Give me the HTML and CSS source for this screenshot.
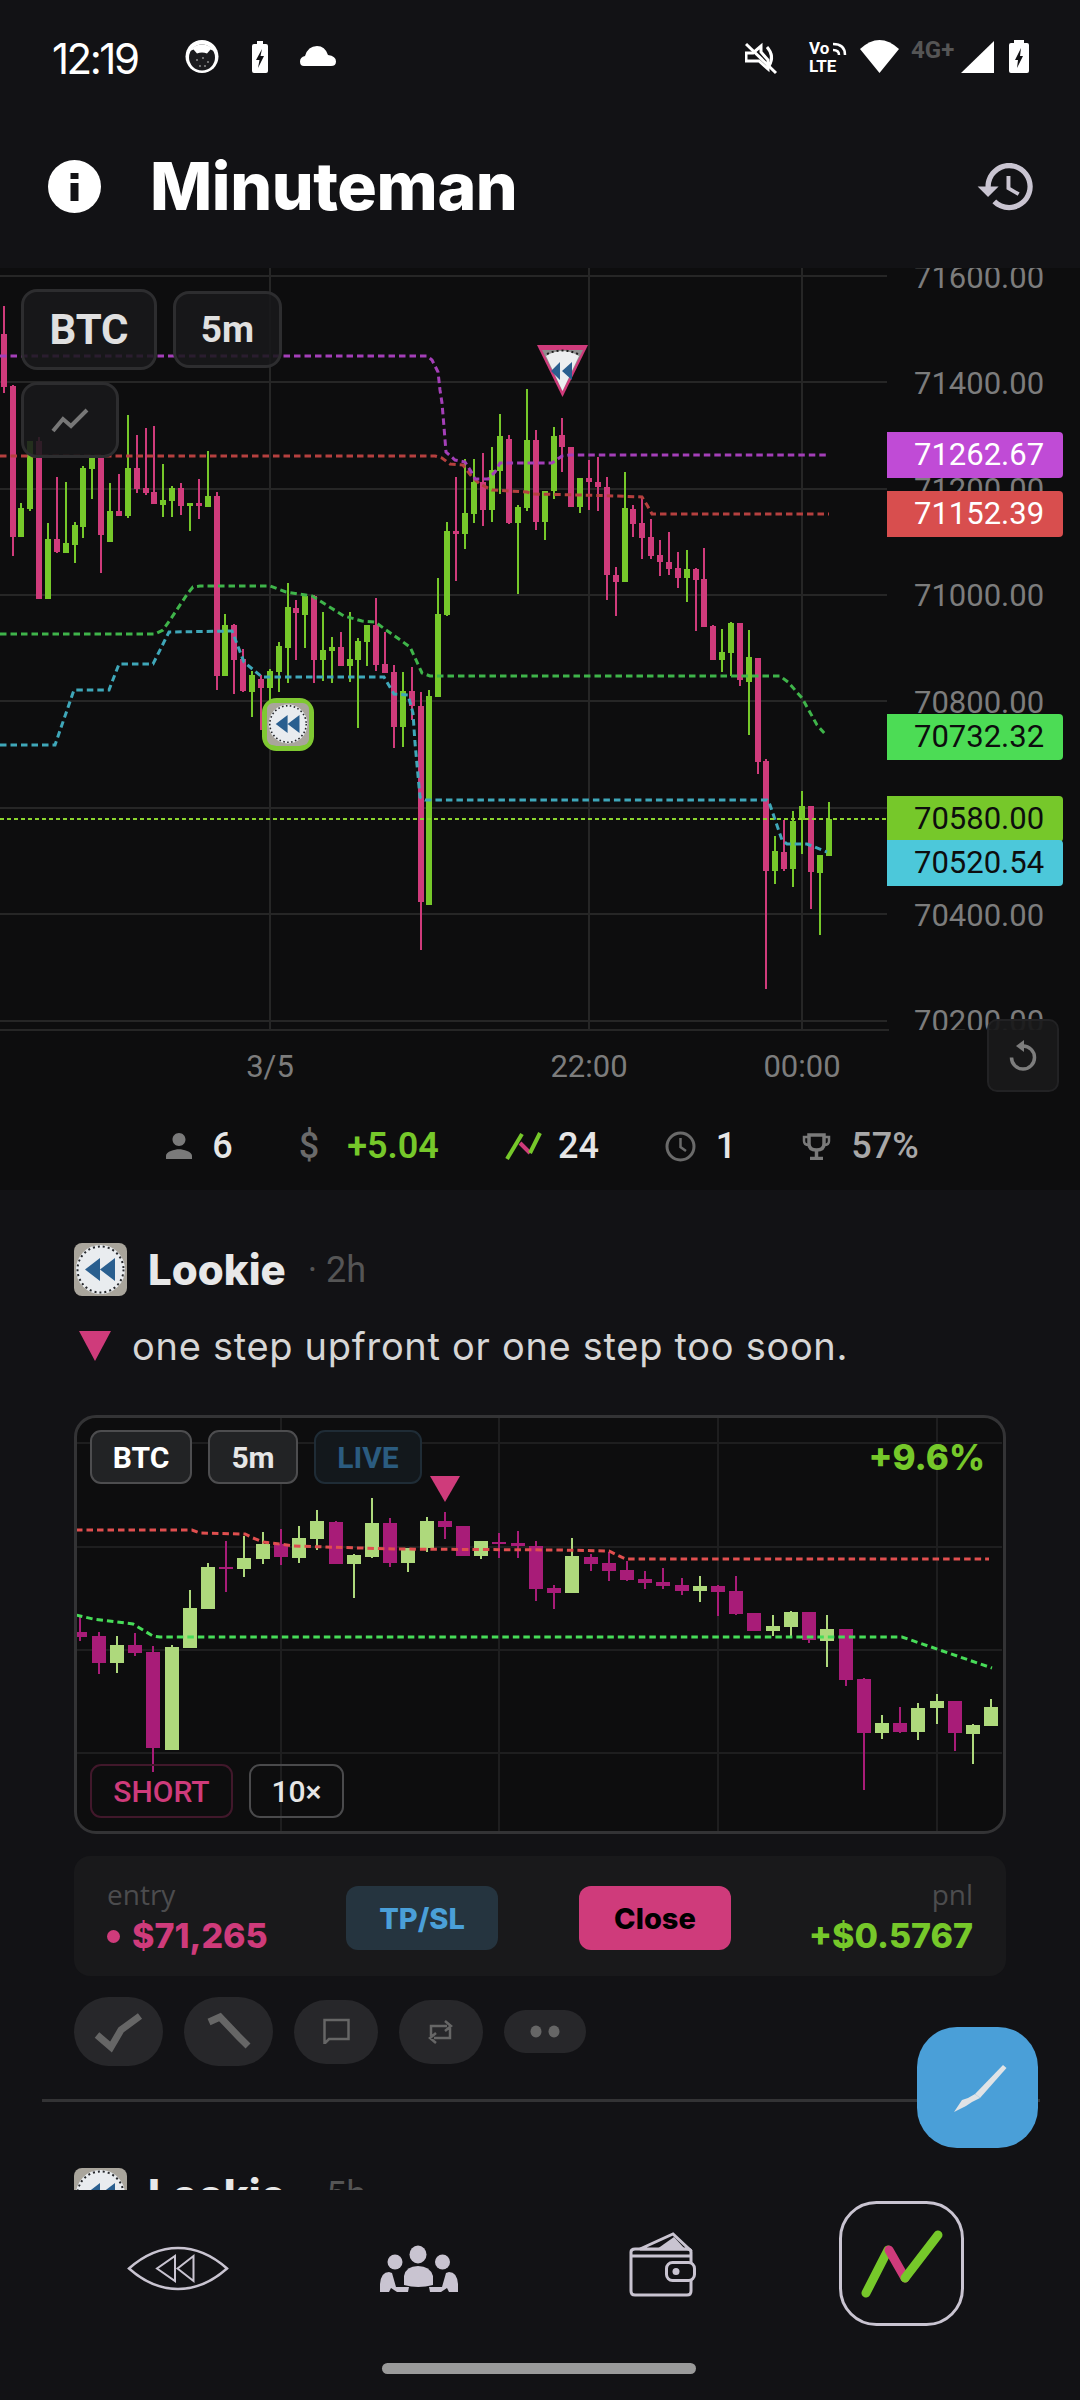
FILE: index.html
```
<!DOCTYPE html>
<html lang="en">
<head>
<meta charset="utf-8">
<title>Minuteman</title>
<link rel="stylesheet" href="styles.css">
</head>
<body>
<svg class="defs" width="0" height="0" aria-hidden="true">
  <symbol id="logo" viewBox="0 0 53 53">
    <rect width="53" height="53" rx="8" fill="#a9a59c"/>
    <circle cx="26.5" cy="26.5" r="24.5" fill="#e9ecef"/>
    <circle cx="26.5" cy="26.5" r="23" fill="none" stroke="#26282c" stroke-width="2" stroke-dasharray="2 3"/>
    <path d="M26 15V38L11 26.5ZM41 15V38L26 26.5Z" fill="#2a5f8f"/>
  </symbol>
</svg>
<div class="screen">
  <header class="top">
    <div class="status">
      <span class="clock">12:19</span>
      <svg class="status-left" width="151" height="40" viewBox="185 36 151 40">
        <circle cx="202" cy="56.5" r="16.5" fill="#fff"/>
        <circle cx="202" cy="57.5" r="13" fill="#1b1b1e"/>
        <path d="M190 51Q193 45 202 44.5Q211 45 214 51L210.500 49.500L207 53.500Q202 51.500 197 53.500L193.500 49.500Z" fill="#fff"/>
        <g fill="#8c8c8c"><circle cx="197" cy="60" r="1"/><circle cx="203" cy="58" r="1"/><circle cx="208" cy="62" r="1"/><circle cx="200" cy="66" r="1"/><circle cx="205" cy="66" r="1"/></g>
        <path d="M257 41H263V44H266Q268 44 268 46V71Q268 73 266 73H254Q252 73 252 71V46Q252 44 254 44H257Z" fill="#fff"/>
        <path d="M262 49L256 60H259.500L258 68L264 56H260.500Z" fill="#121215"/>
        <path d="M304 66Q300 66 300 61.500Q300 57 305 56Q308 46 317 46Q325 46 328 55Q336 56 336 61.500Q336 66 331 66Z" fill="#fff"/>
      </svg>
      <svg class="status-right" width="284" height="40" viewBox="745 36 284 40">
        <path d="M746 53H753L761 46V52L768 60V69L759 61H746Z" fill="none" stroke="#fff" stroke-width="3"/>
        <path d="M767 47Q775 56 769 66" fill="none" stroke="#fff" stroke-width="3"/>
        <path d="M746 44L776 73" stroke="#fff" stroke-width="3"/>
        <text class="volte" x="809" y="53.500">Vo</text>
        <text class="volte" x="809" y="72">LTE</text>
        <path d="M833 44Q845 44 845 55M833 50Q839 50 839 55" fill="none" stroke="#fff" stroke-width="2.500"/>
        <path d="M860 49Q879.500 31 899 49L879.500 73Z" fill="#fff"/>
        <text class="net" x="911" y="58">4G+</text>
        <path d="M961 73L994 41V73Z" fill="#fff"/>
        <path d="M1014 40H1024V43H1027Q1029 43 1029 45V71Q1029 73 1027 73H1011Q1009 73 1009 71V45Q1009 43 1011 43H1014Z" fill="#fff"/>
        <path d="M1021 48L1015 60H1018L1017 68L1023 56H1020Z" fill="#121215"/>
      </svg>
    </div>
    <div class="appbar">
      <svg class="info" width="53" height="53" viewBox="0 0 53 53">
        <circle cx="26.500" cy="26.500" r="26.500" fill="#fff"/>
        <rect x="22.500" y="13" width="8" height="6" fill="#121215"/>
        <rect x="22.500" y="23" width="8" height="18" fill="#121215"/>
      </svg>
      <h1 class="title">Minuteman</h1>
      <svg class="history" width="63" height="63" viewBox="0 0 24 24"><path fill="#c9c4d1" d="M13 3c-4.970 0-9 4.030-9 9H1l3.890 3.890.070.140L9 12H6c0-3.870 3.130-7 7-7s7 3.130 7 7-3.130 7-7 7c-1.930 0-3.680-.790-4.940-2.060l-1.420 1.420C8.270 19.990 10.510 21 13 21c4.970 0 9-4.030 9-9s-4.030-9-9-9zm-1 5v5l4.280 2.540.720-1.210-3.500-2.080V8H12z"/></svg>
    </div>
  </header>

  <section class="market">
    <svg class="chart" width="1080" height="822" viewBox="0 268 1080 822">
      <defs><clipPath id="plot"><rect x="0" y="268" width="1080" height="762"/></clipPath></defs>
      <g class="grid">
        <path d="M0 276H887M0 382H887M0 489H887M0 595H887M0 701H887M0 808H887M0 914H887M0 1021H887M0 1030H889M270 268V1030M589 268V1030M802 268V1030"/>
      </g>
      <g class="ticks" clip-path="url(#plot)">
        <text x="914" y="288">71600.00</text>
        <text x="914" y="394">71400.00</text>
        <text x="914" y="500">71200.00</text>
        <text x="914" y="606">71000.00</text>
        <text x="914" y="713">70800.00</text>
        <text x="914" y="926">70400.00</text>
        <text x="914" y="1032">70200.00</text>
      </g>
      <g class="candles" transform="translate(0 260) scale(.34439 .33333)">
        <path class="wick-p" d="M12 138V398M38 376V887M113 530V1016M165 652V878M293 590V940M345 643V767M397 526V700M423 505V704M447 498V733M525 670V765M578 657V776M630 697V1290M680 1092V1302M706 1167V1296M758 1245V1410M859 1020V1200M912 1005V1268M990 1117V1218M1092 1015V1232M1118 1117V1238M1144 1216V1465M1196 1222V1380M1222 1297V2070"/>
        <path class="body-p" d="M12 222V382M38 378V830M113 543V1016M165 838V876M293 595V824M345 754V767M397 624V687M423 684V698M447 696V732M525 685V737M578 730V738M630 708V1248M680 1095V1200M706 1198V1294M758 1258V1284M859 1045V1060M912 1008V1200M990 1161V1218M1092 1095V1216M1118 1212V1240M1144 1237V1400M1196 1294V1338M1222 1338V1926"/>
        <path class="wick-g" d="M61 730V830M87 543V752M139 790V1016M191 667V878M217 786V910M241 618V833M267 590V718M319 670V845M371 465V773M473 613V770M499 678V770M552 730V812M604 574V740M653 1063V1248M732 1233V1372M784 1228V1340M810 1147V1295M836 970V1268M885 1005V1163M938 1057V1262M964 1132V1268M1016 1057V1265M1040 1135V1403M1066 1095V1218M1170 1237V1462M1245 1290V1935M1271 955V1310"/>
        <path class="body-g" d="M61 745V830M87 543V748M139 838V1016M191 850V878M217 795V854M241 623V800M267 595V627M319 753V845M371 624V768M473 720V735M499 685V722M552 730V738M604 708V740M653 1095V1248M732 1245V1296M784 1233V1284M810 1158V1236M836 1042V1163M885 1007V1064M938 1170V1200M964 1161V1172M1016 1197V1218M1040 1143V1200M1066 1095V1146M1170 1294V1400M1245 1308V1935M1271 1062V1310"/>
      </g>
      <g class="candles-3x" transform="translate(400 330) scale(.33333)">
        <path class="wick-p3" d="M168 441V753M249 370V588M327 315V582M408 300V600M486 264V426M513 351V531M567 390V540M594 381V543M621 441V810M648 711V858M699 525V621M726 498V687M753 567V687M780 630V738M807 606V735M834 666V774M888 714V903M912 654V891M939 885V990M1020 879V1068M1074 984V1332"/>
        <path class="body-p3" d="M168 603V612M249 456V540M327 327V579M408 330V576M486 315V351M513 351V531M567 444V456M594 456V471M621 471V735M648 735V756M699 537V582M726 579V624M753 621V678M780 675V696M807 696V717M834 714V744M888 717V750M912 747V891M939 888V990M1020 879V1050M1074 984V1296"/>
        <path class="wick-g3" d="M141 576V857M195 388V657M222 388V579M276 351V576M300 252V492M354 525V792M381 177V543M435 483V630M462 291V507M540 444V549M675 426V756M861 660V816M966 897V1026M993 876V1038M1047 900V1215"/>
        <path class="body-g3" d="M141 603V855M195 549V612M222 456V552M276 420V540M300 318V423M354 531V579M381 330V534M435 483V576M462 318V483M540 444V531M675 534V756M861 717V744M966 966V990M993 879V969M1047 981V1056"/>
      </g>
      <g class="candles-3x" transform="translate(600 640) scale(.33333)">
        <path class="wick-p3" d="M498 357V1047M552 540V693M633 498V807"/>
        <path class="body-p3" d="M498 363V693M552 636V687M633 498V696"/>
        <path class="wick-g3" d="M525 588V732M579 513V741M606 453V642M660 645V885M687 486V648"/>
        <path class="body-g3" d="M525 633V693M579 543V687M606 498V540M660 645V699M687 537V648"/>
      </g>
      <g class="dash-lines">
        <polyline class="l-cyan" points="0,745 55,745 74,690 109,690 119,664 153,664 169,632 232,631 244,662 262,677 384,677 394,694 408,695 413,713 415,743 420,797 425,800 767,800 770,805 782,840 787,844 807,844 827,852"/>
        <polyline class="l-green" points="0,634 155,634 163,630 170,620 188,593 193,587 200,586 270,586 286,592 312,596 344,616 362,621 375,622 410,647 422,673 430,676 780,676 788,682 802,698 817,725 825,734"/>
        <polyline class="l-red" points="0,456 435,456 442,458 450,464 463,465 472,477 480,484 492,490 527,492 533,494 580,495 617,496 642,497 647,505 652,514 829,514"/>
        <polyline class="l-purple" points="0,356 427,356 432,360 438,372 440,390 442,403 444,427 446,452 455,460 465,462 472,473 475,479 488,479 495,472 500,463 552,463 562,456 570,455 829,455"/>
        <path class="l-last" d="M0 819H887"/>
      </g>
      <g class="marker">
        <path d="M537 345H588L562.500 397Z" fill="#cf3b7b"/>
        <path d="M542 350H583L562.500 391Z" fill="#8f8f8f"/>
        <path d="M546 356Q562 346 579 356L562.500 391Z" fill="#eceef0"/>
        <path d="M547 354Q562 347 578 354" fill="none" stroke="#1c1c1c" stroke-width="2" stroke-dasharray="2 3"/>
        <path d="M560 362V380L551 371ZM572 362V380L562 371Z" fill="#2a5f8f"/>
      </g>
      <rect x="264.500" y="700.500" width="47" height="48" rx="12" fill="#a9a59c" stroke="#7fc832" stroke-width="5"/>
      <use href="#logo" x="267" y="703" width="42" height="42"/>
    </svg>

    <div class="overlay">
      <div class="chip-row">
        <span class="chip chip-pair">BTC</span>
        <span class="chip chip-time">5m</span>
      </div>
      <span class="chip chip-tool">
        <svg width="40" height="26" viewBox="0 0 40 26"><path d="M3 24L13 12L21 19L37 3" fill="none" stroke="#777" stroke-width="4"/></svg>
      </span>
    </div>

    <span class="tag tag-purple">71262.67</span>
    <span class="tag tag-red">71152.39</span>
    <span class="tag tag-green">70732.32</span>
    <span class="tag tag-lime">70580.00</span>
    <span class="tag tag-cyan">70520.54</span>

    <button class="reset" aria-label="Reset">
      <svg width="32" height="36" viewBox="1006 1038 32 36">
        <path d="M1022 1046A11.500 11.500 0 1 1 1010.500 1057.500" fill="none" stroke="#7d7d7d" stroke-width="3.500"/>
        <path d="M1023 1040V1052L1015 1046Z" fill="#7d7d7d"/>
      </svg>
    </button>

    <div class="axis-x">
      <span class="axis-label axis-a">3/5</span>
      <span class="axis-label axis-b">22:00</span>
      <span class="axis-label axis-c">00:00</span>
    </div>

    <div class="stats">
      <div class="stat stat-users">
        <svg width="26" height="26" viewBox="4 4 16 16"><path fill="#7a7a7a" d="M12 12c2.210 0 4-1.790 4-4s-1.790-4-4-4-4 1.790-4 4 1.790 4 4 4zm0 2c-2.670 0-8 1.340-8 4v2h16v-2c0-2.660-5.330-4-8-4z"/></svg>
        <span>6</span>
      </div>
      <div class="stat stat-pnl">
        <span class="dollar">$</span>
        <span class="up">+5.04</span>
      </div>
      <div class="stat stat-trades">
        <svg width="37" height="30" viewBox="505 1130 37 30">
          <path d="M507 1158L522 1133" fill="none" stroke="#76c82a" stroke-width="4"/>
          <path d="M520 1142L530 1152" fill="none" stroke="#cf3b7b" stroke-width="4"/>
          <path d="M530 1152L540 1132" fill="none" stroke="#76c82a" stroke-width="4"/>
        </svg>
        <span>24</span>
      </div>
      <div class="stat stat-time">
        <svg width="31" height="31" viewBox="0 0 31 31">
          <circle cx="15.500" cy="15.500" r="13.500" fill="none" stroke="#6a6a6a" stroke-width="3"/>
          <path d="M15.500 7V16L21 20" fill="none" stroke="#6a6a6a" stroke-width="2.500"/>
        </svg>
        <span>1</span>
      </div>
      <div class="stat stat-win">
        <svg width="29" height="27" viewBox="0 0 29 27">
          <path d="M7 2H22V11Q22 17 14.500 17Q7 17 7 11Z" fill="none" stroke="#7a7a7a" stroke-width="3.500"/>
          <path d="M7 4H2V8Q2 12 7 12M22 4H27V8Q27 12 22 12" fill="none" stroke="#7a7a7a" stroke-width="2.500"/>
          <path d="M14.500 17V24M8 25.500H21" fill="none" stroke="#7a7a7a" stroke-width="3.500"/>
        </svg>
        <span class="muted">57%</span>
      </div>
    </div>
  </section>

  <main class="feed">
    <article class="post">
      <div class="author">
        <svg class="avatar" width="53" height="53"><use href="#logo" width="53" height="53"/></svg>
        <span class="name">Lookie</span>
        <span class="when"><i class="sep">·</i> 2h</span>
      </div>
      <div class="note">
        <svg class="note-mark" width="32" height="30" viewBox="0 0 32 30"><path d="M0 0H32L16 30Z" fill="#cf3b7b"/></svg>
        <p>one step upfront or one step too soon.</p>
      </div>
      <div class="mini">
        <svg class="mini-chart" width="925" height="413" viewBox="77 1419 925 413">
          <path class="mini-grid" d="M77 1444H1002M77 1548H1002M77 1651H1002M77 1754H1002M281 1419V1832M499 1419V1832M718 1419V1832M937 1419V1832"/>
          <g transform="translate(60 1420) scale(.33333)">
            <path class="mini-wick-m" d="M60 591V666M117 640V765M225 643V711M279 681V1058M498 366V519M663 330V438M828 306V435M990 297V444M1155 279V360M1209 321V411M1317 342V417M1374 336V417M1428 366V546M1482 498V570"/>
            <path class="mini-body-m" d="M60 640V654M117 652V732M225 678V702M279 699V987M498 444V450M663 375V414M828 309V435M990 312V432M1155 306V324M1209 321V411M1317 369V375M1374 372V382M1428 381V510M1482 507V522"/>
            <path class="mini-wick-g" d="M171 652V762M336 678V993M390 513V687M444 432V570M552 351V474M609 339V435M717 321V432M771 273V393M882 405V537M936 237V417M1044 387V459M1101 294V399M1263 366V420"/>
            <path class="mini-body-g" d="M171 678V732M336 684V993M390 567V687M444 444V570M552 417V450M609 375V420M717 357V417M771 306V360M882 408V435M936 312V414M1044 387V432M1101 306V387M1263 366V411"/>
          </g>
          <g transform="translate(540 1420) scale(.33333)">
            <path class="mini-wick-m" d="M153 405V456M207 399V486M261 426V486M315 456V510M369 447V510M426 477V528M534 498V591M588 471V588M642 582V636M807 579V672M918 630V801M972 777V1113M1080 864V942M1245 846V996"/>
            <path class="mini-body-m" d="M153 414V435M207 432V456M261 453V483M315 480V492M369 489V501M426 498V516M534 501V519M588 516V585M642 582V636M807 579V663M918 630V783M972 780V942M1080 912V939M1245 846V942"/>
            <path class="mini-wick-g" d="M96 357V522M480 471V549M699 588V651M753 576V657M861 588V744M1026 888V960M1134 852V963M1191 825V915M1299 915V1035M1353 840V921"/>
            <path class="mini-body-g" d="M96 411V522M480 501V516M699 621V636M753 579V624M861 630V666M1026 912V942M1134 867V939M1191 846V867M1299 918V945M1353 864V921"/>
          </g>
          <polyline class="mini-red" points="76,1531 192,1531 200,1534 245,1535 253,1539 263,1543 287,1546 293,1547 393,1550 560,1551 609,1552 619,1557 626,1560 989,1560"/>
          <polyline class="mini-green" points="76,1616 93,1620 133,1625 153,1637 160,1638 902,1638 992,1669"/>
          <path class="mini-mark" d="M430 1477H460L445 1503Z"/>
        </svg>
        <div class="mini-top">
          <span class="tagchip tagchip-solid tc-btc">BTC</span>
          <span class="tagchip tagchip-solid tc-5m">5m</span>
          <span class="tagchip tc-live">LIVE</span>
          <span class="gain">+9.6%</span>
        </div>
        <div class="mini-bottom">
          <span class="tagchip tc-short">SHORT</span>
          <span class="tagchip tc-lev">10×</span>
        </div>
      </div>
      <div class="position">
        <div class="pos-col">
          <span class="pos-label">entry</span>
          <span class="pos-value pos-entry"><i class="dot"></i>$71,265</span>
        </div>
        <button class="btn btn-tp">TP/SL</button>
        <button class="btn btn-close">Close</button>
        <div class="pos-col pos-right">
          <span class="pos-label">pnl</span>
          <span class="pos-value pos-pnl">+$0.5767</span>
        </div>
      </div>
      <div class="actions">
        <span class="pill pill-vote">
          <svg width="89" height="69" viewBox="74 1997 89 69"><path d="M97 2035L111 2047L121 2030L140 2016" fill="none" stroke="#666" stroke-width="7"/></svg>
        </span>
        <span class="pill pill-vote">
          <svg width="89" height="69" viewBox="184 1997 89 69"><path d="M209 2022L220 2017L238 2036L248 2046" fill="none" stroke="#666" stroke-width="7"/></svg>
        </span>
        <span class="pill pill-mid">
          <svg width="84" height="64" viewBox="294 2000 84 64"><path d="M324.500 2044V2020H348.500V2039H329L325 2043" fill="none" stroke="#666" stroke-width="2.500"/></svg>
        </span>
        <span class="pill pill-mid">
          <svg width="84" height="64" viewBox="399 2000 84 64"><path d="M431 2036V2026H447M445 2021L451 2026L445 2031M450 2028V2038H434M436 2033L430 2038L436 2043" fill="none" stroke="#666" stroke-width="2.500"/></svg>
        </span>
        <span class="pill pill-more">
          <svg width="82" height="43" viewBox="504 2010 82 43"><ellipse cx="536" cy="2031.500" rx="5.500" ry="6" fill="#666"/><ellipse cx="554" cy="2031.500" rx="5.500" ry="6" fill="#666"/></svg>
        </span>
      </div>
    </article>
    <hr class="divider">
    <article class="post">
      <div class="author">
        <svg class="avatar" width="53" height="53"><use href="#logo" width="53" height="53"/></svg>
        <span class="name">Lookie</span>
        <span class="when"><i class="sep">·</i> 5h</span>
      </div>
    </article>
  </main>

  <button class="fab" aria-label="Write">
    <svg width="121" height="121" viewBox="917 2027 121 121">
      <path d="M1003 2065L1006.500 2068L980 2098L975 2094Z" fill="#e0e3e6"/>
      <path d="M975 2094L980 2098L972 2102L966 2106L954 2112L962 2100L968 2098Z" fill="#e0e3e6"/>
    </svg>
  </button>

  <nav class="nav">
    <div class="nav-row">
      <svg width="125" height="125" viewBox="116 2201 125 125">
        <path d="M129 2268.500Q152 2248 178 2248Q204 2248 227 2268.500Q204 2289 178 2289Q152 2289 129 2268.500Z" fill="none" stroke="#c9c4d1" stroke-width="2.500"/>
        <path d="M175 2256V2281L157 2268.500ZM193.500 2256V2281L177.500 2268.500Z" fill="none" stroke="#c9c4d1" stroke-width="2"/>
      </svg>
      <svg width="125" height="125" viewBox="356 2201 125 125">
        <g fill="#c9c4d1">
          <ellipse cx="417" cy="2254.500" rx="8.500" ry="9"/>
          <ellipse cx="394" cy="2262" rx="7.500" ry="7.500"/>
          <ellipse cx="441.500" cy="2262" rx="7.500" ry="7.500"/>
          <path d="M403 2276Q405 2266 417 2266Q429 2266 432 2276V2285Q417 2289 403 2285Z"/>
          <path d="M379 2292V2284Q380 2272 388 2272L391 2273L395 2287H408L407 2292H396L390 2288L388 2292Z"/>
          <path d="M457 2292V2284Q456 2272 448 2272L445 2273L441 2287H428L429 2292H440L446 2288L448 2292Z"/>
        </g>
      </svg>
      <svg width="125" height="125" viewBox="597 2201 125 125">
        <path d="M630 2252Q630 2249 634 2249H686Q690 2249 690 2252V2291Q690 2295 686 2295H634Q630 2295 630 2291Z" fill="none" stroke="#c9c4d1" stroke-width="3"/>
        <path d="M630 2256H690" fill="none" stroke="#c9c4d1" stroke-width="3"/>
        <rect x="665.500" y="2262.500" width="28" height="18" rx="6" fill="#121215" stroke="#c9c4d1" stroke-width="3"/>
        <circle cx="675" cy="2271.500" r="3.500" fill="#c9c4d1"/>
        <path d="M639 2249L672 2234L688 2249Z" fill="#121215" stroke="#c9c4d1" stroke-width="3"/>
        <path d="M656 2249L673 2237L684 2249Z" fill="#c9c4d1"/>
      </svg>
      <svg class="nav-active" width="125" height="125" viewBox="840 2201 125 125">
        <rect x="841.500" y="2202.500" width="122" height="122" rx="36" fill="none" stroke="#c9c4d1" stroke-width="3"/>
        <path d="M867 2293L889 2250" fill="none" stroke="#76c82a" stroke-width="9" stroke-linecap="round"/>
        <path d="M890 2250L906 2278" fill="none" stroke="#cf3b7b" stroke-width="9" stroke-linecap="round"/>
        <path d="M906 2278L939 2235" fill="none" stroke="#76c82a" stroke-width="9" stroke-linecap="round"/>
      </svg>
    </div>
    <div class="home-bar"></div>
  </nav>
</div>
</body>
</html>
```
FILE: styles.css
```
* { box-sizing: border-box; }
html, body { margin: 0; padding: 0; background: #121215; }
body { width: 1080px; height: 2400px; overflow: hidden; font-family: "Inter", "Liberation Sans", sans-serif; color: #fff; }
.defs { position: absolute; }
svg { display: block; }
i { font-style: normal; }
button { border: 0; padding: 0; font: inherit; }
.screen { position: relative; display: flex; flex-direction: column; width: 1080px; height: 2400px; }

.top { height: 268px; flex: none; }
.status { display: flex; align-items: center; height: 76px; padding: 36px 51px 0 52px; }
.clock { font-family: "Inter", sans-serif; font-weight: 400; font-size: 42px; letter-spacing: -2.500px; width: 133px; line-height: 40px; margin-top: 6px; }
.status-right { margin-left: auto; }
.volte { font: 700 17px "Roboto", sans-serif; fill: #fff; }
.net { font: 700 24px "Roboto", sans-serif; fill: #555; }
.appbar { display: flex; align-items: center; height: 192px; padding: 28px 42px 0 48px; }
.title { margin: 0 0 0 49px; font-size: 66px; font-weight: 800; letter-spacing: -.400px; line-height: 80px; }
.history { margin-left: auto; }

.market { position: relative; flex: none; height: 922px; background: #0d0d0e; }
.chart { position: relative; }
.grid path { stroke: #262626; stroke-width: 2; fill: none; }
.ticks text { font: 400 31px "Roboto", sans-serif; fill: #7c7c7c; }
.candles path, .candles-3x path { fill: none; shape-rendering: crispEdges; }
.candles .wick-p, .candles .wick-g { stroke-width: 5.800; }
.candles .body-p, .candles .body-g { stroke-width: 17.400; }
.wick-p3, .wick-g3 { stroke-width: 6; }
.body-p3, .body-g3 { stroke-width: 18; }
.wick-p, .body-p, .wick-p3, .body-p3 { stroke: #cf3b7b; }
.wick-g, .body-g, .wick-g3, .body-g3 { stroke: #76c82a; }
.dash-lines polyline { fill: none; stroke-width: 3; stroke-dasharray: 6.500 4; }
.l-cyan { stroke: #3fa7b9; }
.l-green { stroke: #3fb44a; }
.l-red { stroke: #b5403f; }
.l-purple { stroke: #a43fb8; }
.l-last { stroke: #8bd42e; stroke-width: 2; stroke-dasharray: 4 3; fill: none; }

.overlay { position: absolute; left: 21px; top: 21px; display: flex; flex-direction: column; gap: 12px; align-items: flex-start; }
.chip-row { display: flex; align-items: center; gap: 16px; }
.chip { display: flex; align-items: center; justify-content: center; background: rgba(25, 25, 27, .88); border: 3px solid #2d2d2f; border-radius: 16px; font-family: "Roboto", sans-serif; font-weight: 700; color: #e0e0e0; }
.chip-pair { width: 136px; height: 81px; font-size: 42px; }
.chip-time { width: 109px; height: 77px; font-size: 37px; }
.chip-tool { width: 98px; height: 76px; }

.tag { position: absolute; left: 887px; width: 176px; height: 46px; padding-left: 27px; font: 400 31px/46px "Roboto", sans-serif; border-radius: 0 4px 4px 0; }
.tag-purple { top: 164px; background: #c04bd6; color: #fff; }
.tag-red { top: 223px; background: #d84e4e; color: #fff; }
.tag-green { top: 446px; background: #4cdc55; color: #0d0d0e; }
.tag-lime { top: 528px; background: #76c82a; color: #0d0d0e; }
.tag-cyan { top: 572px; background: #4cc8da; color: #0d0d0e; }

.reset { position: absolute; left: 987px; top: 751px; display: flex; align-items: center; justify-content: center; width: 72px; height: 73px; background: rgba(25, 25, 27, .94); border: 2px solid #222224; border-radius: 10px; }

.axis-x { position: absolute; left: 0; top: 781px; width: 887px; height: 36px; }
.axis-label { position: absolute; top: 0; font: 400 31px/36px "Roboto", sans-serif; color: #7c7c7c; transform: translateX(-50%); }
.axis-a { left: 270px; }
.axis-b { left: 589px; }
.axis-c { left: 802px; }

.stats { display: flex; align-items: center; justify-content: center; gap: 66px; height: 100px; margin-top: 6px; padding-left: 5px; font: 500 36px/40px "Roboto", sans-serif; color: #e6e6e6; }
.stat { display: flex; align-items: center; gap: 20px; }
.dollar { color: #6a6a6a; font-weight: 500; }
.up { color: #76c82a; font-weight: 600; }
.stat-pnl { gap: 28px; }
.stat-trades { gap: 16px; }
.muted { color: #a8a8a8; }

.feed { position: relative; flex: 1; min-height: 0; overflow: hidden; padding: 53px 74px 0 74px; background: #121215; }
.author { display: flex; align-items: center; height: 53px; }
.avatar { flex: none; }
.name { margin-left: 21px; font-size: 42px; font-weight: 800; color: #e8e8e8; }
.when { margin-left: 22px; font: 400 36px "Roboto", sans-serif; color: #555; }
.note { display: flex; align-items: center; gap: 21px; height: 46px; margin: 27px 0 46px 5px; }
.note p { margin: 0; font-size: 38px; letter-spacing: .700px; color: #d6d6d6; line-height: 46px; }

.mini { position: relative; height: 419px; background: #0d0d0e; border: 3px solid #333335; border-radius: 22px; overflow: hidden; }
.mini-grid { stroke: #1e1e1f; stroke-width: 2; fill: none; }
.mini-chart path, .mini-chart polyline { fill: none; }
.mini-chart g path { shape-rendering: crispEdges; }
.mini-wick-m, .mini-wick-g { stroke-width: 6; }
.mini-body-m, .mini-body-g { stroke-width: 42; }
.mini-wick-m, .mini-body-m { stroke: #a81c78; }
.mini-wick-g, .mini-body-g { stroke: #aed97c; }
.mini-chart .mini-red, .mini-chart .mini-green { stroke-width: 3; stroke-dasharray: 6.500 4; }
.mini-red { stroke: #e04f4f; }
.mini-green { stroke: #47dc58; }
.mini-chart .mini-mark { fill: #cf3b7b; }

.mini-top, .mini-bottom { position: absolute; left: 13px; display: flex; gap: 16px; }
.mini-top { top: 12px; right: 18px; }
.mini-bottom { top: 346px; }
.tagchip { display: flex; align-items: center; justify-content: center; height: 54px; border: 2.500px solid #4d4d4f; border-radius: 11px; font: 700 30px "Roboto", sans-serif; color: #e6e6e6; }
.tagchip-solid { background: #222325; }
.tc-btc { width: 102px; color: #fff; }
.tc-5m { width: 90px; }
.tc-live { width: 108px; border-color: #1f2c36; background: #13181c; color: #2b5c80; }
.tc-short { width: 143px; border-color: #41182b; color: #cf3b7b; font-weight: 500; }
.tc-lev { width: 95px; border-color: #4a4a4c; font-weight: 500; }
.gain { margin-left: auto; font: 800 35px/54px "Inter", sans-serif; color: #76c82a; }

.position { display: grid; grid-template-columns: 239px 152px 152px 1fr; column-gap: 81px; height: 120px; margin-top: 22px; padding: 0 33px; background: #19191b; border-radius: 16px; }
.position { column-gap: 0; grid-template-columns: 239px 152px 81px 152px 1fr; }
.pos-col { display: flex; flex-direction: column; align-items: flex-start; padding-top: 21px; white-space: nowrap; }
.pos-right { align-items: flex-end; grid-column: 5; }
.pos-label { font: 400 28px/34px "Open Sans", sans-serif; color: #4c4c4e; }
.pos-value { display: flex; align-items: center; margin-top: 4px; font-size: 34px; font-weight: 800; line-height: 42px; }
.pos-entry { color: #cf3b7b; }
.pos-pnl { color: #76c82a; }
.dot { width: 13px; height: 13px; margin-right: 12px; border-radius: 50%; background: #cf3b7b; }
.btn { height: 64px; margin-top: 30px; border-radius: 12px; font-family: "Inter", sans-serif; font-weight: 800; font-size: 29px; }
.btn-tp { background: #25343f; color: #4a9fd8; }
.btn-close { grid-column: 4; background: #cf3b7b; color: #000; }

.actions { display: flex; align-items: center; gap: 21px; height: 69px; margin-top: 21px; }
.pill { display: block; flex: none; background: #27272a; border-radius: 40px; }
.pill-vote { width: 89px; height: 69px; }
.pill-mid { width: 84px; height: 64px; }
.pill-more { width: 82px; height: 43px; }

.divider { height: 3px; margin: 33px -34px 66px -32px; border: 0; background: #333335; }

.fab { position: absolute; left: 917px; top: 2027px; width: 121px; height: 121px; border-radius: 40px; background: #4a9fd8; }

.nav { flex: none; height: 210px; background: #121215; padding-top: 11px; }
.nav-row { display: grid; grid-template-columns: repeat(4, 241px); justify-items: center; padding-left: 58px; height: 125px; }
.home-bar { width: 314px; height: 11px; margin: 27px auto 0; margin-top: 27px; border-radius: 6px; background: #9a9a9a; position: relative; top: 10px; left: -1px; }
```
